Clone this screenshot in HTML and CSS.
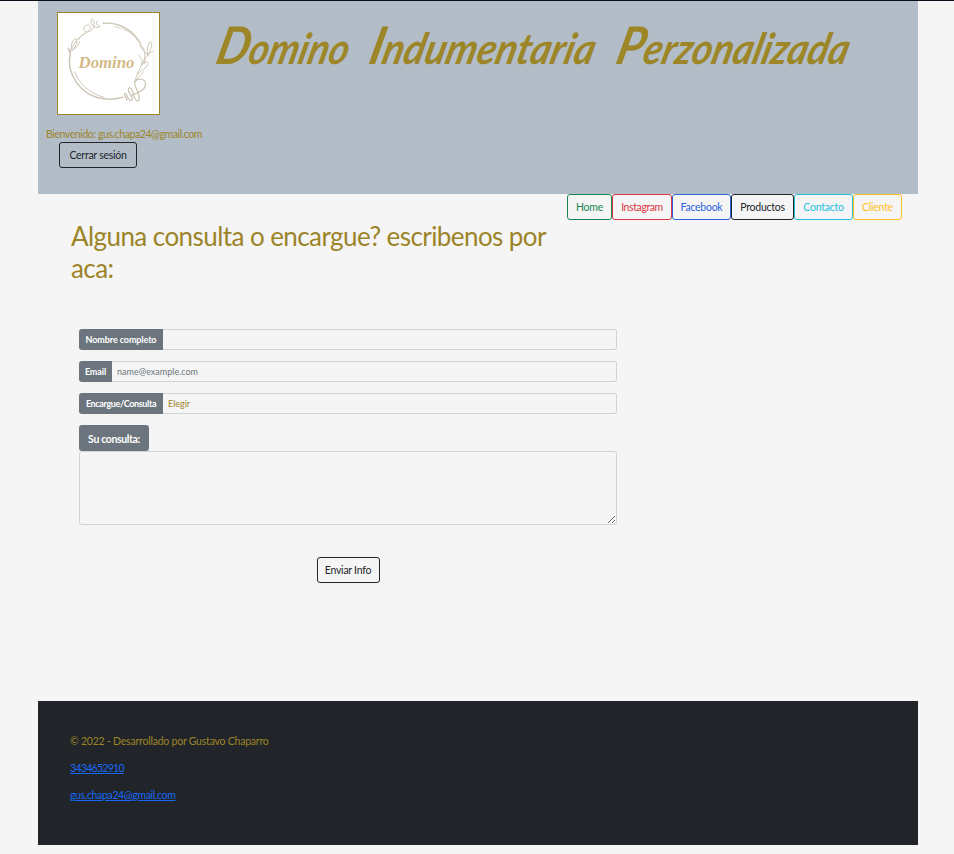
FILE: index.html
```html
<!DOCTYPE html>
<html lang="es">
<head>
<meta charset="utf-8">
<title>Domino Indumentaria Perzonalizada</title>
<link rel="stylesheet" href="styles.css">
</head>
<body>
<div class="page">
  <header class="header">
    <div class="brand">
      <svg class="logo" viewBox="0 0 103 103" role="img" aria-label="Domino">
        <g fill="none" stroke="#cdc6b5" stroke-width="1" stroke-linecap="round">
          <path d="M46 10.500C63 9 77 18 84 31" stroke-width="1.500" />
          <path d="M57 14C68 15 76 21 81 28" stroke-dasharray="1 1.500" />
          <path d="M12.500 41C8 61 22 84 46 87.500C53 88.500 60 87.500 66 86" stroke-width="1.500" />
          <path d="M17 60C22 73 32 82 47 86" />
          <path d="M12 41C15 30 22 24 29 20C37 15 31 9 27 14C24 20 33 21 36 15C38 10 36 4 34 7C32 12 39 17 43 14M40 8C38 11 40 14 42 13" />
          <path d="M12 40C7 35 12 33 12 40C18 35 21 30 18 26C14 28 13 33 14 36M11 39C17 38 20 34 22 30M21 27C23 22 27 21 29 20" />
          <path d="M84 32C90 38 90 46 85 54C81 60 80 65 78 70M84 32C84 37 90 41 92 43C95 36 97 32 94 29C91 33 90 40 92 44M97 39C91 41 88 47 88 52M82 43C86 46 86 49 85 53C90 48 93 49 91 54C88 58 84 58 82 62M87 60C85 64 80 66 79 70" />
          <path d="M75 84C82 81 91 78 89 71C86 64 75 68 79 75C83 83 84 89 81 90C76 88 77 76 73 76C68 79 79 87 75 89C71 90 70 81 68 82C66 85 71 86 70 89" stroke-width="1.300" />
        </g>
        <text class="logo-text" x="21" y="56" textLength="57" lengthAdjust="spacingAndGlyphs">Domino</text>
      </svg>
      <p class="welcome">Bienvenido: gus.chapa24@gmail.com</p>
      <button class="btn dark logout">Cerrar sesión</button>
    </div>
    <h1 class="title">
      <svg class="title-art" viewBox="0 0 650 64">
        <text transform="translate(7 47) skewX(-14)" textLength="132" lengthAdjust="spacingAndGlyphs"><tspan class="cap">D</tspan>omino</text>
        <text transform="translate(160 47) skewX(-14)" textLength="225" lengthAdjust="spacingAndGlyphs"><tspan class="cap">I</tspan>ndumentaria</text>
        <text transform="translate(407 47) skewX(-14)" textLength="232" lengthAdjust="spacingAndGlyphs"><tspan class="cap">P</tspan>erzonalizada</text>
      </svg>
    </h1>
  </header>
  <nav class="nav">
    <a class="btn home">Home</a><a class="btn instagram">Instagram</a><a class="btn facebook">Facebook</a><a class="btn dark products">Productos</a><a class="btn contact">Contacto</a><a class="btn client">Cliente</a>
  </nav>
  <main class="main">
    <h2 class="heading">Alguna consulta o encargue? escribenos por aca:</h2>
    <form class="form">
      <div class="group"><label class="tag wide">Nombre completo</label><input class="field" type="text"></div>
      <div class="group"><label class="tag mail">Email</label><input class="field" type="text" placeholder="name@example.com"></div>
      <div class="group"><label class="tag wide option">Encargue/Consulta</label><div class="field choice">Elegir</div></div>
      <label class="tag query">Su consulta:</label>
      <textarea class="area"></textarea>
      <button class="btn dark send" type="button">Enviar Info</button>
    </form>
  </main>
  <footer class="footer">
    <p class="copy">© 2022 - Desarrollado por Gustavo Chaparro</p>
    <p class="phone"><a href="#">3434652910</a></p>
    <p class="mailto"><a href="#">gus.chapa24@gmail.com</a></p>
  </footer>
</div>
</body>
</html>
```
FILE: styles.css
```css
* { box-sizing: border-box; }
body {
  margin: 0;
  height: 854px;
  overflow: hidden;
  border-top: 1px solid #0c0e1c;
  background: #f5f5f5;
  color: #9c8428;
  font: 10.5px/16px "Gill Sans", "Gill Sans MT", Lato, sans-serif;
}
h1, h2, p { margin: 0; font-weight: 400; }
.page { width: 880px; margin-left: 38px; }
.header { display: flex; height: 193px; background: #b3bdc8; }
.brand { width: 169px; padding: 11px 0 0 8px; }
.logo {
  display: block;
  width: 103px;
  height: 103px;
  margin-left: 11px;
  border: 1px solid #9c8428;
  background: #fff;
}
.logo-text {
  font: italic 700 18px "Liberation Serif", serif;
  fill: #d3b985;
}
.welcome { margin-top: 11px; white-space: nowrap; letter-spacing: -.41px; }
.logout { width: 78px; margin: 0 0 0 13px; }
.title { padding-top: 16px; }
.title-art { display: block; width: 650px; height: 64px; overflow: visible; }
.title-art text {
  font: italic 700 43px Lato, sans-serif;
  fill: #9c8628;
}
.title-art .cap { font-size: 52px; }
.btn {
  display: inline-flex;
  align-items: center;
  justify-content: center;
  height: 26px;
  padding: 0;
  border: 1px solid currentColor;
  border-radius: 3px;
  background: none;
  font: inherit;
  letter-spacing: -.26px;
  white-space: nowrap;
}
.dark { color: #212529; }
.nav { display: flex; justify-content: flex-end; padding-right: 16px; }
.home { width: 45px; color: #198754; }
.instagram { width: 60px; color: #dc3545; letter-spacing: -.4px; }
.facebook { width: 59px; color: #2b62e0; }
.products { width: 63px; }
.contact { width: 59px; color: #25bfdc; }
.client { width: 49px; color: #ffc022; }
.main { height: 481px; padding-left: 33px; }
.heading { width: 500px; font-size: 26px; line-height: 32px; letter-spacing: -.57px; }
.form { display: flex; flex-direction: column; width: 538px; margin: 45px 0 0 8px; }
.group { display: flex; height: 21px; margin-bottom: 11px; }
.tag {
  display: flex;
  align-items: center;
  justify-content: center;
  background: #6c757d;
  color: #fff;
  border-radius: 3px 0 0 3px;
  font-size: 9px;
  font-weight: 700;
  letter-spacing: -.1px;
  padding-top: 1px;
  white-space: nowrap;
}
.wide { width: 84px; }
.option { letter-spacing: -.36px; }
.mail { width: 33px; }
.field {
  flex: 1;
  min-width: 0;
  padding: 1px 5px 0;
  border: 1px solid #ced4da;
  border-left: 0;
  border-radius: 0 3px 3px 0;
  background: none;
  font: 9px/18px "Gill Sans", "Gill Sans MT", Lato, sans-serif;
  color: #9c8428;
}
.field::placeholder { color: #6c757d; opacity: 1; }
.query { width: 70px; height: 26px; border-radius: 3px; font-size: 10.5px; letter-spacing: -.36px; }
.area {
  height: 74px;
  border: 1px solid #ced4da;
  border-radius: 3px;
  background: none;
  resize: vertical;
}
.send { width: 63px; margin-top: 32px; align-self: center; }
.footer { height: 144px; padding: 32px; background: #212529; }
.footer p { height: 27px; }
.copy { letter-spacing: -.22px; }
.phone { letter-spacing: -.7px; }
.mailto { letter-spacing: -.35px; }
.footer a { color: #1769f5; }
```
